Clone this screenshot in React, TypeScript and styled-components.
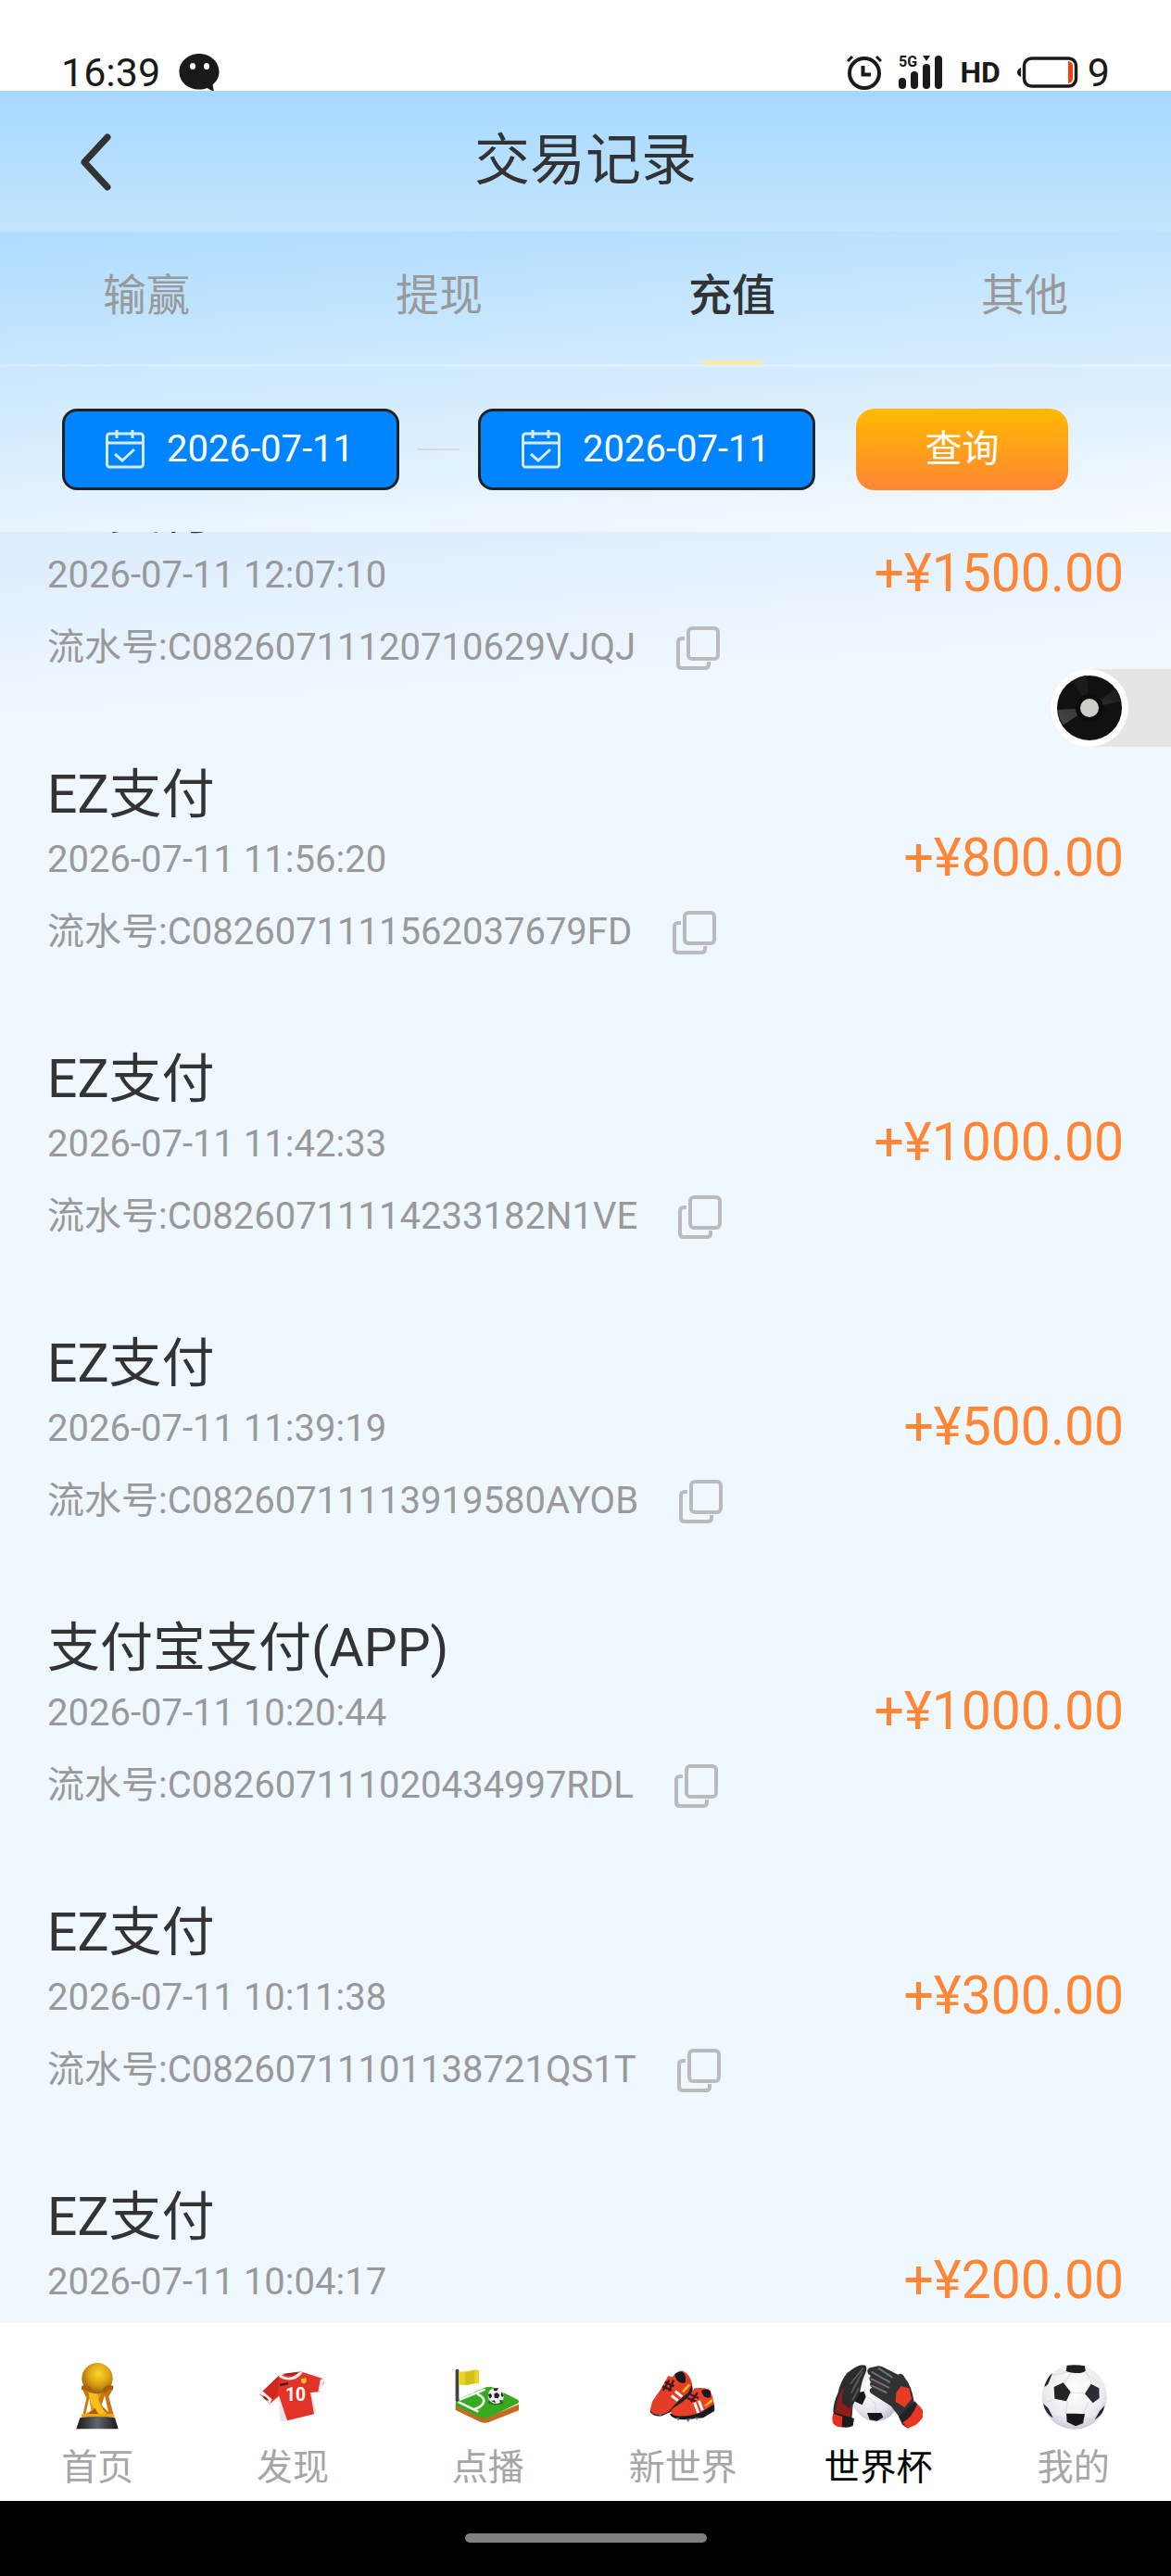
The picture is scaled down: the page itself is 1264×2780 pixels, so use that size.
import React, { useLayoutEffect, useRef, useState } from 'react';
import styled, { createGlobalStyle } from 'styled-components';

const GlobalStyle = createGlobalStyle`
  *, *::before, *::after {
    box-sizing: border-box;
  }

  body {
    margin: 0;
    background: #eff7ff;
    font-family: Roboto, 'Noto Sans CJK SC', sans-serif;
    color: #333;
  }

  button, input {
    font-family: inherit;
    border: none;
    padding: 0;
    background: none;
  }
`;

const Screen = styled.div`
  display: flex;
  flex-direction: column;
  height: 100vh;
  overflow: hidden;
`;

const StatusBar = styled.div`
  display: flex;
  justify-content: space-between;
  align-items: flex-end;
  height: 98px;
  padding: 0 66px;
  background: #fff;
  color: #1a1a1a;
  flex-shrink: 0;
`;

const StatusGroup = styled.div<{ $gap: number }>`
  display: flex;
  align-items: center;
  gap: ${props => props.$gap}px;
  height: 40px;
`;

const StatusText = styled.span`
  font-size: 43px;
  line-height: 40px;
`;

const NetworkText = styled.span`
  font-size: 32px;
  font-weight: 700;
  line-height: 40px;
`;

const Header = styled.header`
  display: grid;
  grid-template-columns: 1fr auto 1fr;
  align-items: center;
  height: 152px;
  padding: 0 80px;
  background: linear-gradient(180deg, #a6d9ff, #c4e5ff);
  flex-shrink: 0;
`;

const BackButton = styled.button`
  display: flex;
  justify-self: start;
  cursor: pointer;
`;

const Title = styled.h1`
  margin: 0;
  font-size: 60px;
  font-weight: 400;
  line-height: 88px;
`;

const Panel = styled.div`
  background: linear-gradient(176deg, #aedcff, #f8fbff);
  flex-shrink: 0;
`;

const Tabs = styled.nav`
  display: flex;
  height: 146px;
  border-bottom: 3px solid rgba(255, 255, 255, 0.3);
`;

const Tab = styled.button<{ $active: boolean }>`
  display: flex;
  flex: 1;
  flex-direction: column;
  align-items: center;
  justify-content: flex-end;
  gap: 40px;
  font-size: 47px;
  line-height: 60px;
  font-weight: ${props => (props.$active ? 500 : 400)};
  color: ${props => (props.$active ? '#333' : '#999')};
  cursor: pointer;

  &::after {
    content: '';
    width: 65px;
    height: 4px;
    border-radius: 2px;
    background: ${props => (props.$active ? '#ffeb99' : 'transparent')};
  }
`;

const Filter = styled.form`
  display: flex;
  align-items: center;
  height: 178px;
  padding: 0 67px;
`;

const DateBox = styled.label`
  display: flex;
  align-items: center;
  gap: 24px;
  width: 364px;
  height: 88px;
  padding: 0 44px;
  border: 3px solid #222;
  border-radius: 16px;
  background: #0084ff;

  svg {
    flex-shrink: 0;
  }
`;

const DateInput = styled.input`
  width: 100%;
  min-width: 0;
  font-size: 40px;
  line-height: 60px;
  color: #fff;
  outline: none;
`;

const Dash = styled.span`
  width: 45px;
  height: 2px;
  margin: 0 20px;
  background: #ddd6d8;
`;

const SearchButton = styled.button`
  width: 229px;
  height: 88px;
  margin-left: 44px;
  border-radius: 20px;
  background: linear-gradient(180deg, #ffba00, #ff8635);
  font-size: 40px;
  line-height: 60px;
  color: #fff;
  cursor: pointer;
`;

const List = styled.main`
  flex: 1;
  min-height: 0;
  overflow-y: auto;
  scrollbar-width: none;
  background: linear-gradient(176deg, #dbecff, #eff7ff 200px);
`;

const Record = styled.article`
  display: flex;
  align-items: center;
  justify-content: space-between;
  min-height: 307px;
  padding: 0 51px;
`;

const RecordInfo = styled.div`
  align-self: flex-start;
  padding-top: 46px;
`;

const RecordTitle = styled.h2`
  margin: 0;
  font-size: 57px;
  font-weight: 400;
  line-height: 80px;
`;

const RecordTime = styled.div`
  font-size: 40px;
  line-height: 60px;
  color: #999;
`;

const Serial = styled.div`
  display: flex;
  align-items: center;
  gap: 44px;
  margin-top: 18px;
  font-size: 40px;
  line-height: 60px;
  color: #999;
`;

const CopyButton = styled.button`
  display: flex;
  cursor: pointer;
`;

const Amount = styled.div`
  font-size: 57px;
  line-height: 80px;
  color: #ff8635;
`;

const MusicButton = styled.button`
  position: absolute;
  top: 722px;
  right: 0;
  display: flex;
  width: 130px;
  height: 84px;
  border-radius: 42px 0 0 42px;
  background: #e5e5e5;
  cursor: pointer;
`;

const NavBar = styled.nav`
  display: flex;
  padding: 36px 0 6px;
  background: #fff;
  flex-shrink: 0;
`;

const NavItem = styled.a<{ $active?: boolean }>`
  display: flex;
  flex: 1;
  flex-direction: column;
  align-items: center;
  gap: 10px;
  font-size: 39px;
  line-height: 60px;
  text-decoration: none;
  color: ${props => (props.$active ? '#000' : '#a6a6a6')};
`;

const HomeIndicator = styled.div`
  display: flex;
  justify-content: center;
  height: 81px;
  padding-top: 35px;
  background: #000;
  flex-shrink: 0;

  &::after {
    content: '';
    width: 261px;
    height: 10px;
    border-radius: 5px;
    background: #808080;
  }
`;

const ChatIcon = () => (
  <svg width="44" height="42" viewBox="0 0 44 42">
    <path
      d="M22 1C10 1 .5 9.500.5 20.500S10 39.500 22 39.500c3 0 6-.5 8.500-1.500L38 42l-1.500-7.500C41 31 43.500 26 43.500 20.500 43.500 9.500 34 1 22 1z"
      fill="#1a1a1a"
    />
    <ellipse cx="15" cy="14.500" rx="3" ry="3.500" fill="#fff" />
    <ellipse cx="30" cy="14.500" rx="3" ry="3.500" fill="#fff" />
  </svg>
);

const AlarmIcon = () => (
  <svg width="38" height="38" viewBox="0 0 38 38" fill="none" stroke="#1a1a1a">
    <circle cx="19" cy="20" r="16" strokeWidth="4" />
    <path d="M17.500 12v9.500H26" strokeWidth="4" />
    <path d="M1 7l5-5M37 7l-5-5" strokeWidth="3" />
  </svg>
);

const SignalIcon = () => (
  <svg width="48" height="38" viewBox="0 0 48 38" fill="#1a1a1a">
    <text x="0" y="13" fontSize="16" fontWeight="700" fontFamily="Roboto">5G</text>
    <rect x="0" y="25" width="8" height="12" rx="4" />
    <rect x="13" y="18" width="8" height="19" rx="4" />
    <rect x="26" y="10" width="8" height="27" rx="4" />
    <rect x="39" y="1" width="8" height="36" rx="4" />
    <path d="M26 1h8l-4 6z" />
  </svg>
);

const BatteryIcon = () => (
  <svg width="66" height="34" viewBox="0 0 66 34">
    <rect x="7.500" y="2" width="56" height="30" rx="8" fill="none" stroke="#1a1a1a" strokeWidth="3.500" />
    <path d="M4 12v10C1 21 0 19 0 17s1-4 4-5z" fill="#1a1a1a" />
    <path d="M55 5c4 1 5 3 5 6v12c0 3-1 5-5 6z" fill="#f73e12" />
  </svg>
);

const BackIcon = () => (
  <svg width="46" height="64" viewBox="0 0 46 64">
    <path d="M36 6L11 33l25 27" fill="none" stroke="#333" strokeWidth="7" strokeLinecap="round" strokeLinejoin="round" />
  </svg>
);

const CalendarIcon = () => (
  <svg width="42" height="42" viewBox="0 0 42 42" fill="none" stroke="#d4eaff" strokeWidth="3">
    <rect x="1.500" y="4" width="39" height="36" rx="3" />
    <path d="M2 14h38M12 0v9M29 0v9" />
    <path d="M10 26l8 7 13-12" />
  </svg>
);

const CopyIcon = () => (
  <svg width="47" height="47" viewBox="0 0 47 47" fill="none" stroke="#bbb" strokeWidth="4">
    <rect x="13" y="2" width="32" height="33" rx="4" />
    <path d="M9 13H6q-4 0-4 4v24q0 4 4 4h25q4 0 4-4v-3" />
  </svg>
);

const RecordDisc = () => (
  <svg width="84" height="84" viewBox="0 0 84 84">
    <defs>
      <linearGradient id="shine" x1="0" y1="1" x2="1" y2="0">
        <stop offset="0" stopColor="#4a4a4a" />
        <stop offset="1" stopColor="#161616" />
      </linearGradient>
    </defs>
    <circle cx="42" cy="42" r="42" fill="#fff" />
    <circle cx="42" cy="42" r="35" fill="#111" />
    <path d="M42 42L8 44q1 10 6 16zM42 42l34-7q-1-8-6-14z" fill="url(#shine)" />
    <path d="M42 42L24 13q8-6 15-6z" fill="#1c1c1c" />
    <circle cx="42" cy="42" r="15" fill="#0c0c0c" />
    <circle cx="42" cy="42" r="10" fill="#cfcdca" />
  </svg>
);

const TrophyIcon = () => (
  <svg width="100" height="80" viewBox="166 189 300 240">
    <defs>
      <radialGradient id="gold" cx="0.55" cy="0.35" r="0.65">
        <stop offset="0" stopColor="#f8d829" />
        <stop offset="0.5" stopColor="#dfa615" />
        <stop offset="1" stopColor="#94610c" />
      </radialGradient>
      <linearGradient id="plinth">
        <stop offset="0" stopColor="#17191f" />
        <stop offset="0.5" stopColor="#63656b" />
        <stop offset="1" stopColor="#17191f" />
      </linearGradient>
    </defs>
    <path d="M265 290l22-10 30 28 32-28 20 10-16 30 18 64H268l13-60z" fill="#c87811" />
    <path d="M290 325l-12 50 34-18zM340 315l12 54-22-22z" fill="#fff" />
    <path d="M287 300l29 8 14-2-8 24 20 50h-44z" fill="#e2980f" />
    <path d="M288 306c4 38 22 60 42 76h24c-24-22-36-46-38-76z" fill="#f7bf1d" />
    <path d="M287 376l22-20 10 20z" fill="#b25a0c" />
    <circle cx="316" cy="260" r="50" fill="url(#gold)" />
    <path d="M266 284c14-4 28 0 34 16l-6 8c-10-10-20-12-30-10zM368 284c-14-6-30 0-34 14l6 12c8-10 18-14 26-12z" fill="#a8600e" />
    <rect x="264" y="375" width="107" height="13" rx="5" fill="#eba51a" />
    <path d="M260 388q56-8 113 0l11 36H248z" fill="url(#plinth)" />
  </svg>
);

const ShirtIcon = () => (
  <svg width="100" height="80" viewBox="798 189 300 240">
    <path d="M903 320l4 78 16 4 8-80zM1008 300l16 74-16 4z" fill="#e9e3ef" />
    <path d="M905 250l68-12 70 22 6 14-14 30-30 2 12 70-87 21-26-80-30 25-33-30z" fill="#e33226" />
    <path d="M905 250l-55 52 30 28 18-16z" fill="#cf291f" />
    <path d="M842 310l8-9 31 27-7 13zM1038 262l10 4-6 32-12 6z" fill="#f4f0f4" />
    <path d="M850 316q14 4 21 17-16-3-21-17z" fill="#8f1d1a" />
    <path d="M908 246q30 26 64-8l8 4q-32 40-78 12z" fill="#f5edf0" />
    <path d="M916 245q26 14 50-6z" fill="#aa211c" />
    <path d="M906 278l27-5v7l-27 6z" fill="#31222b" />
    <path d="M974 262l17-3 1 13-8 6-8-4z" fill="#f0bd3b" />
    <text x="924" y="334" fontSize="58" fontWeight="700" fill="#fff" fontFamily="Roboto">10</text>
  </svg>
);

const PitchIcon = () => (
  <svg width="100" height="80" viewBox="170 189 300 240">
    <path d="M214 345l94 45 111-46v20l-97 38q-14 4-26 0l-82-39z" fill="#c66a1d" />
    <path d="M218 330l94-41q12-4 22 0l82 40q6 6 0 12l-96 47q-12 5-24 0l-78-37q-8-8 0-21z" fill="#37aa22" />
    <path d="M222 336l66 32M226 330l84-34" fill="none" stroke="#fff" strokeWidth="7" />
    <path d="M284 310q28 14 20 30-6 14-30 20" fill="none" stroke="#f4faf2" strokeWidth="8" />
    <rect x="214" y="231" width="11" height="104" rx="4" fill="#3c4248" />
    <path d="M224 238c24 4 40-10 66-4v44c-26-6-42 10-66 2z" fill="#e8d522" />
    <path d="M246 240c14 0 22-4 30-6v42c-10 2-18 6-30 6z" fill="#d3bd1b" />
    <ellipse cx="344" cy="338" rx="25" ry="8" fill="#1d7415" />
    <circle cx="345" cy="316" r="26" fill="#eef0f2" />
    <path d="M336 292h18l-7 9h-8zM339 310l10-4 8 8-5 11-12-2zM319 312l9-3 5 9-8 8zM364 304l7 12-6 6-4-8zM330 334l10-3 5 9zM356 331l10 0-6 8z" fill="#22252a" />
  </svg>
);

const BootsIcon = () => (
  <svg width="100" height="80" viewBox="802 189 300 240">
    <path d="M968 250q18 24 16 58l-34 44-66 30q-24 4-38-12l4-18z" fill="#20212c" />
    <path d="M905 252l12 4q20-24 36-20 22 10 29 42l-12 28q-38 30-62 60-30 20-56 6-8-10 2-38 30-40 51-82z" fill="#e53c26" />
    <path d="M926 246q20-14 30-2 8 12 4 30-30 6-34-28z" fill="#171820" />
    <path d="M894 272l30 14M886 286l30 13M922 266l-14 36M908 266l-20 34" stroke="#3b1a1c" strokeWidth="7" />
    <path d="M916 316l20 16M928 302l22 18" stroke="#fff" strokeWidth="9" />
    <path d="M952 304l22-24" stroke="#f8bd17" strokeWidth="8" />
    <path d="M1042 320q16 22 12 46l-36 22-60 6q-40 0-48-18z" fill="#171a24" />
    <path d="M990 292q34-4 50 6 12 26 12 46l-38 24q-44 18-80 14-22-4-20-14 0-10 20-20 36-20 56-56z" fill="#e94128" />
    <path d="M1012 300q20-10 30 4v18q-24 6-30-22z" fill="#171820" />
    <path d="M976 312l28 12M966 324l28 10M1000 306l-22 30" stroke="#46191b" strokeWidth="7" />
    <path d="M990 338l12 34M1004 332l12 32" stroke="#fff" strokeWidth="9" />
    <path d="M1024 350l24-20" stroke="#f8bd17" strokeWidth="7" />
    <path d="M872 376h12l-4 8zM930 388h12l-4 10zM962 392h14l-6 10zM990 386h12l-4 10z" fill="#707c9c" />
  </svg>
);

const GlovesIcon = () => (
  <svg width="100" height="80" viewBox="174 189 300 240">
    <defs>
      <radialGradient id="ball" cx="0.4" cy="0.4" r="0.65">
        <stop offset="0" stopColor="#fff" />
        <stop offset="0.7" stopColor="#e6e3ea" />
        <stop offset="1" stopColor="#b9bcd2" />
      </radialGradient>
    </defs>
    <ellipse cx="316" cy="312" rx="78" ry="88" fill="url(#ball)" />
    <path d="M248 308l30-6 6 18-12 26-26-12zM288 372h46l6 14-20 12-24-4z" fill="#17171b" />
    <path d="M282 316l34 26M316 342l-2 30" stroke="#c9c8d0" strokeWidth="2" />
    <path d="M282 218q8 8 0 26-8 18-12 34l-6 28-22 40-4 48-60-24q0-30 16-64 6-32 28-62 40-34 60-26z" fill="#2c2b2f" />
    <path d="M194 322l16-34-4 50 24 20 12-16-8 46-50-10z" fill="#8e1d1c" />
    <path d="M274 238l-32 56M262 264l-26 44M262 290l-22 42" stroke="#5b5758" strokeWidth="5" />
    <path d="M276 226l-42 52" stroke="#6a6868" strokeWidth="4" />
    <path d="M180 370l66 20-4 24q-20 10-54 0-16-14-8-44z" fill="#1a1a20" />
    <path d="M178 374l30 10-2 34q-20 0-28-12-6-14 0-32z" fill="#e4301f" />
    <path d="M314 222q14-6 30 4l44 22q12-8 22 10 22 26 30 78l-40 60-34-46-66-42q-10-14 4-18-12-10-4-18-10-12 0-20-22-14-4-26 6-2 18-4z" fill="#303236" />
    <path d="M304 240l56 32M302 262l56 28M304 284l46 22M326 228l42 28" stroke="#6f7378" strokeWidth="6" strokeLinecap="round" />
    <path d="M300 270l44 22" stroke="#8c211c" strokeWidth="3" />
    <path d="M398 286l26 6 8 34-22 28-30-18 2-30z" fill="#eb3a22" />
    <path d="M442 334l26 30-2 24-46 34-18-12-12-26z" fill="#222228" />
    <path d="M450 344q20 10 18 42-18 30-50 34l-16-16q32-18 48-60z" fill="#ee3521" />
  </svg>
);

const FootballIcon = () => (
  <svg width="100" height="80" viewBox="806 189 300 240">
    <defs>
      <radialGradient id="football" cx="0.5" cy="0.4" r="0.6">
        <stop offset="0" stopColor="#fff" />
        <stop offset="0.75" stopColor="#ecebf0" />
        <stop offset="1" stopColor="#c9c9dc" />
      </radialGradient>
    </defs>
    <circle cx="958" cy="320" r="105" fill="url(#football)" />
    <path
      d="M936 240l-52 10M990 240l54 40M926 276l22-36M946 306l44 2M936 334l-6 40 8 6M892 328l-34 14M1002 338l-14 38M1038 330l20-6M990 392l46 0M934 390l-36-6M1016 278l-20-38"
      fill="none"
      stroke="#cfced6"
      strokeWidth="2"
    />
    <path d="M934 218q28-4 58 2l2 16q-10 8-32 7-20-1-31-7z" fill="#202024" />
    <path d="M892 288l30-14 24 30-14 30-38-8z" fill="#262426" />
    <path d="M992 310l20-32 26 14 1 32-21 16z" fill="#2a2c31" />
    <path d="M932 374l28 0 32 2-6 30-24 9-28-14z" fill="#17171b" />
    <path d="M887 243l-14 36-12 10q6-30 26-46zM857 342l16 14 16 32q-24-12-32-46zM1056 348l-16 18-16 28q28-16 32-46z" fill="#24252b" />
  </svg>
);

interface PaymentRecord {
  title: string;
  time: string;
  serial?: string;
  amount: string;
}

const records: PaymentRecord[] = [
  { title: 'EZ支付', time: '2026-07-11 12:07:10', serial: 'C08260711120710629VJQJ', amount: '1500.00' },
  { title: 'EZ支付', time: '2026-07-11 11:56:20', serial: 'C0826071111562037679FD', amount: '800.00' },
  { title: 'EZ支付', time: '2026-07-11 11:42:33', serial: 'C08260711114233182N1VE', amount: '1000.00' },
  { title: 'EZ支付', time: '2026-07-11 11:39:19', serial: 'C08260711113919580AYOB', amount: '500.00' },
  { title: '支付宝支付(APP)', time: '2026-07-11 10:20:44', serial: 'C082607111020434997RDL', amount: '1000.00' },
  { title: 'EZ支付', time: '2026-07-11 10:11:38', serial: 'C08260711101138721QS1T', amount: '300.00' },
  { title: 'EZ支付', time: '2026-07-11 10:04:17', amount: '200.00' },
];

const tabs = ['输赢', '提现', '充值', '其他'];

const navItems = [
  { label: '首页', icon: <TrophyIcon /> },
  { label: '发现', icon: <ShirtIcon /> },
  { label: '点播', icon: <PitchIcon /> },
  { label: '新世界', icon: <BootsIcon /> },
  { label: '世界杯', icon: <GlovesIcon /> },
  { label: '我的', icon: <FootballIcon /> },
];

const App: React.FC = () => {
  const [activeTab, setActiveTab] = useState('充值');
  const [startDate, setStartDate] = useState('2026-07-11');
  const [endDate, setEndDate] = useState('2026-07-11');
  const listRef = useRef<HTMLElement>(null);

  useLayoutEffect(() => {
    if (listRef.current) {
      listRef.current.scrollTop = 109;
    }
  }, []);

  return (
    <Screen>
      <GlobalStyle />

      <StatusBar>
        <StatusGroup $gap={20}>
          <StatusText>16:39</StatusText>
          <ChatIcon />
        </StatusGroup>
        <StatusGroup $gap={18}>
          <AlarmIcon />
          <SignalIcon />
          <NetworkText>HD</NetworkText>
          <StatusGroup $gap={10}>
            <BatteryIcon />
            <StatusText>9</StatusText>
          </StatusGroup>
        </StatusGroup>
      </StatusBar>

      <Header>
        <BackButton aria-label="返回">
          <BackIcon />
        </BackButton>
        <Title>交易记录</Title>
      </Header>

      <Panel>
        <Tabs>
          {tabs.map((tab) => (
            <Tab key={tab} $active={tab === activeTab} onClick={() => setActiveTab(tab)}>
              {tab}
            </Tab>
          ))}
        </Tabs>
        <Filter onSubmit={(e) => e.preventDefault()}>
          <DateBox>
            <CalendarIcon />
            <DateInput aria-label="开始日期" value={startDate} onChange={(e) => setStartDate(e.target.value)} />
          </DateBox>
          <Dash />
          <DateBox>
            <CalendarIcon />
            <DateInput aria-label="结束日期" value={endDate} onChange={(e) => setEndDate(e.target.value)} />
          </DateBox>
          <SearchButton type="submit">查询</SearchButton>
        </Filter>
      </Panel>

      <List ref={listRef}>
        {records.map((record) => (
          <Record key={record.time}>
            <RecordInfo>
              <RecordTitle>{record.title}</RecordTitle>
              <RecordTime>{record.time}</RecordTime>
              {record.serial && (
                <Serial>
                  <span>流水号:{record.serial}</span>
                  <CopyButton aria-label="复制">
                    <CopyIcon />
                  </CopyButton>
                </Serial>
              )}
            </RecordInfo>
            <Amount>+¥{record.amount}</Amount>
          </Record>
        ))}
      </List>

      <NavBar>
        {navItems.map((item) => (
          <NavItem key={item.label} href="#" $active={item.label === '世界杯'}>
            {item.icon}
            {item.label}
          </NavItem>
        ))}
      </NavBar>
      <HomeIndicator />

      <MusicButton aria-label="音乐">
        <RecordDisc />
      </MusicButton>
    </Screen>
  );
};

export default App;
